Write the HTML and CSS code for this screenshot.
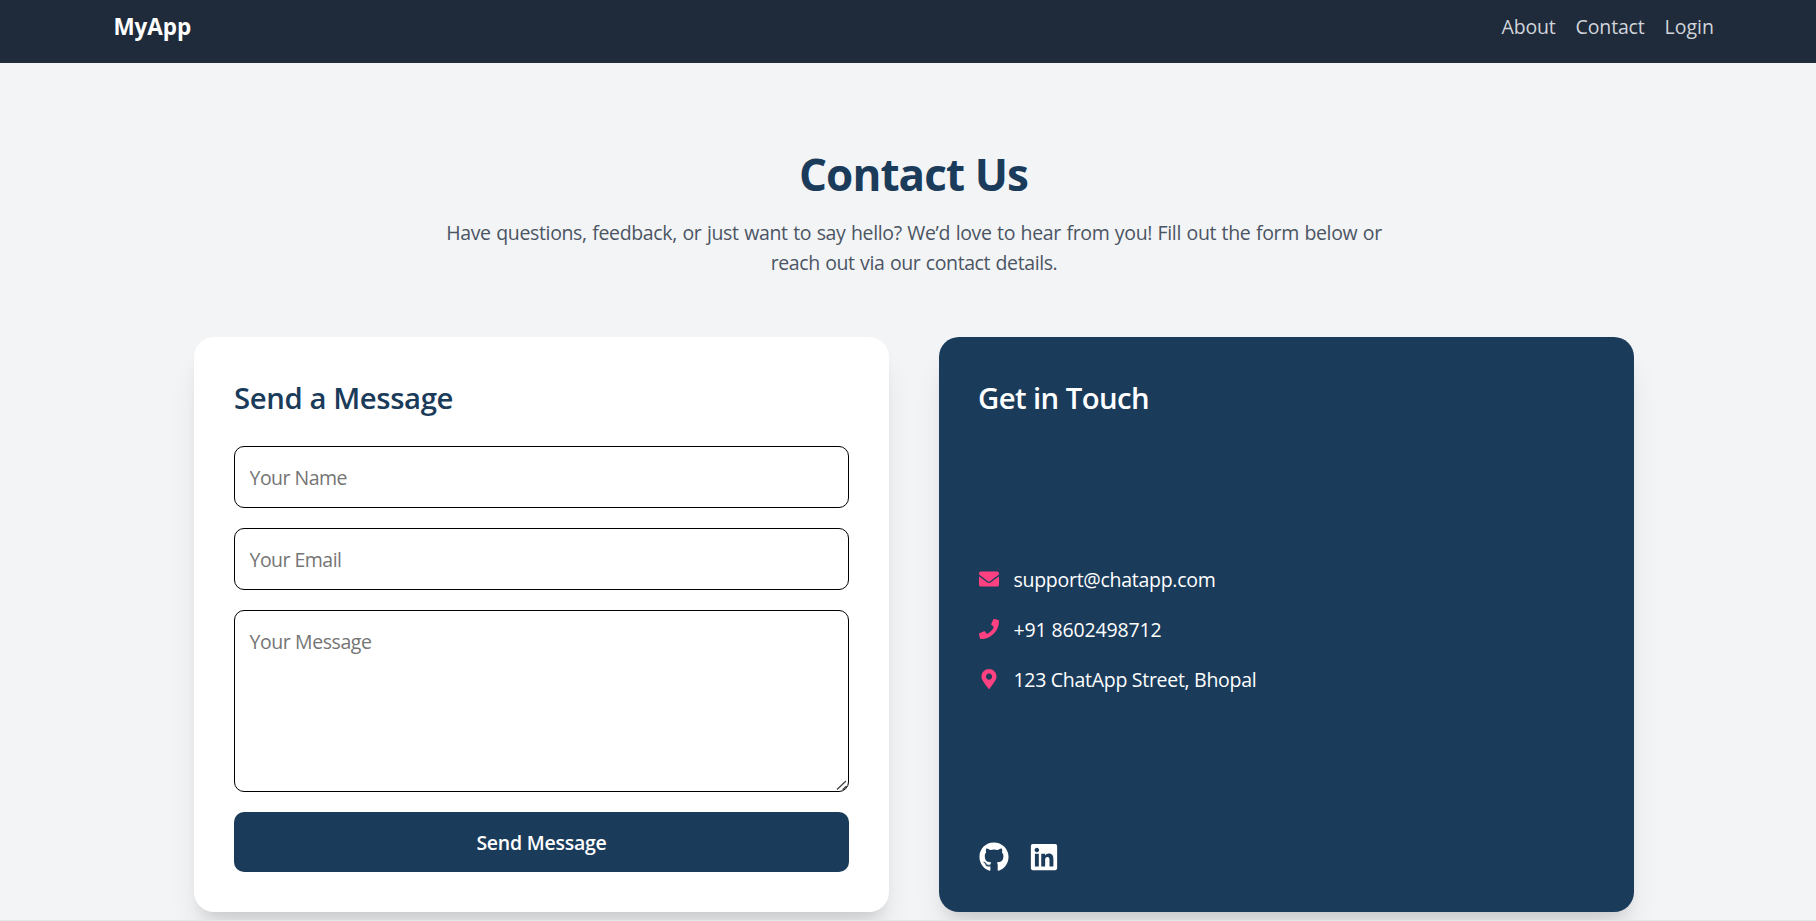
FILE: index.html
```html
<!DOCTYPE html>
<html lang="en">
<head>
<meta charset="utf-8">
<title>Contact Us - MyApp</title>
<link rel="stylesheet" href="styles.css">
</head>
<body>
<div class="page">
  <header class="nav">
    <div class="nav-inner">
      <a class="brand">MyApp</a>
      <nav class="links">
        <a>About</a>
        <a>Contact</a>
        <a class="login">Login</a>
      </nav>
    </div>
  </header>
  <main class="contact">
    <section class="hero">
      <h1>Contact Us</h1>
      <p>Have questions, feedback, or just want to say hello? We’d love to hear from you! Fill out the form below or<br><span class="tail">reach out via our contact details.</span></p>
    </section>
    <div class="cards">
      <section class="card form-card">
        <h2>Send a Message</h2>
        <form class="form">
          <input class="field" type="text" placeholder="Your Name">
          <input class="field" type="email" placeholder="Your Email">
          <div class="area-wrap">
            <textarea class="field area" placeholder="Your Message"></textarea>
            <svg class="grip" viewBox="0 0 12 12"><path d="M1 10.500L10 2M6.500 10.800L10.500 7"/></svg>
          </div>
          <button class="send" type="button">Send Message</button>
        </form>
      </section>
      <section class="card info-card">
        <h2>Get in Touch</h2>
        <ul class="details">
          <li>
            <svg class="icon" viewBox="0 0 512 512"><path d="M502.3 190.8c3.900-3.100 9.700-.2 9.700 4.700V400c0 26.500-21.500 48-48 48H48c-26.500 0-48-21.500-48-48V195.600c0-5 5.700-7.800 9.700-4.700 22.400 17.400 52.100 39.500 154.100 113.600 21.100 15.400 56.700 47.800 92.200 47.600 35.700.3 72-32.800 92.300-47.600 102-74.100 131.600-96.300 154-113.700zM256 320c23.200.4 56.600-29.200 73.400-41.400 132.700-96.300 142.800-104.700 173.400-128.700 5.800-4.500 9.200-11.500 9.200-18.900v-19c0-26.500-21.500-48-48-48H48c-26.500 0-48 21.500-48 48v19c0 7.400 3.400 14.300 9.200 18.900 30.600 23.900 40.700 32.400 173.400 128.700 16.800 12.200 50.200 41.800 73.400 41.400z"/></svg>
            <span class="mail">support@chatapp.com</span>
          </li>
          <li>
            <svg class="icon" viewBox="0 0 512 512"><path d="M493.400 24.600l-104-24c-11.300-2.600-22.900 3.300-27.500 13.900l-48 112c-4.200 9.800-1.400 21.300 6.900 28l60.600 49.600c-36 76.700-98.900 140.500-177.200 177.200l-49.600-60.600c-6.800-8.300-18.200-11.100-28-6.900l-112 48C3.900 366.500-2 378.100.6 389.400l24 104C27.100 504.200 36.700 512 48 512c256.100 0 464-207.500 464-464 0-11.200-7.700-20.900-18.600-23.400z"/></svg>
            <span class="phone">+91 8602498712</span>
          </li>
          <li>
            <svg class="icon" viewBox="0 0 384 512"><path d="M172.268 501.670C26.970 291.031 0 269.413 0 192 0 85.961 85.961 0 192 0s192 85.961 192 192c0 77.413-26.970 99.031-172.268 309.670-9.535 13.774-29.930 13.773-39.464 0zM192 272c44.183 0 80-35.817 80-80s-35.817-80-80-80-80 35.817-80 80 35.817 80 80 80z"/></svg>
            <span class="address">123 ChatApp Street, Bhopal</span>
          </li>
        </ul>
        <div class="social">
          <svg viewBox="0 0 496 512"><path d="M165.900 397.400c0 2-2.300 3.600-5.200 3.600-3.300.3-5.600-1.300-5.600-3.600 0-2 2.300-3.600 5.200-3.600 3-.3 5.600 1.300 5.600 3.600zm-31.100-4.500c-.7 2 1.300 4.300 4.300 4.900 2.600 1 5.600 0 6.200-2s-1.300-4.300-4.300-5.200c-2.600-.7-5.500.3-6.200 2.300zm44.200-1.700c-2.900.7-4.900 2.600-4.600 4.900.3 2 2.900 3.300 5.900 2.600 2.900-.7 4.900-2.600 4.600-4.600-.3-1.900-3-3.200-5.900-2.900zM244.800 8C106.100 8 0 113.300 0 252c0 110.900 69.800 205.800 169.500 239.200 12.800 2.300 17.300-5.600 17.300-12.100 0-6.200-.3-40.400-.3-61.400 0 0-70 15-84.700-29.800 0 0-11.400-29.100-27.800-36.600 0 0-22.900-15.700 1.600-15.400 0 0 24.900 2 38.600 25.800 21.900 38.600 58.600 27.500 72.900 20.900 2.300-16 8.800-27.100 16-33.700-55.900-6.200-112.300-14.300-112.300-110.500 0-27.500 7.600-41.300 23.600-58.900-2.600-6.500-11.100-33.300 2.600-67.900 20.900-6.500 69 27 69 27 20-5.600 41.500-8.500 62.800-8.500s42.800 2.900 62.800 8.500c0 0 48.100-33.600 69-27 13.700 34.700 5.200 61.400 2.600 67.900 16 17.700 25.800 31.500 25.800 58.900 0 96.500-58.900 104.200-114.800 110.500 9.200 7.900 17 22.900 17 46.400 0 33.700-.3 75.400-.3 83.600 0 6.500 4.600 14.400 17.300 12.100C428.200 457.800 496 362.900 496 252 496 113.300 383.500 8 244.800 8zM97.200 352.900c-1.300 1-1 3.300.7 5.200 1.600 1.600 3.900 2.300 5.200 1 1.300-1 1-3.300-.7-5.200-1.600-1.600-3.900-2.300-5.200-1zm-10.800-8.100c-.7 1.300.3 2.900 2.300 3.900 1.600 1 3.600.7 4.300-.7.7-1.300-.3-2.900-2.300-3.900-2-.6-3.600-.3-4.300.7zm32.400 35.600c-1.600 1.300-1 4.300 1.300 6.200 2.300 2.300 5.200 2.600 6.500 1 1.300-1.300.7-4.300-1.300-6.200-2.200-2.300-5.200-2.600-6.500-1zm-11.400-14.700c-1.600 1-1.600 3.600 0 5.900 1.600 2.300 4.300 3.300 5.600 2.300 1.600-1.300 1.600-3.900 0-6.200-1.400-2.300-4-3.300-5.600-2z"/></svg>
          <svg viewBox="0 0 448 512"><path d="M416 32H31.900C14.300 32 0 46.500 0 64.300v383.400C0 465.500 14.300 480 31.900 480H416c17.600 0 32-14.500 32-32.300V64.300c0-17.800-14.400-32.300-32-32.300zM135.400 416H69V202.200h66.500V416zm-33.200-243c-21.300 0-38.500-17.300-38.500-38.500S80.900 96 102.200 96c21.200 0 38.500 17.300 38.500 38.500 0 21.300-17.200 38.500-38.500 38.500zm282.100 243h-66.400V312c0-24.800-.5-56.700-34.500-56.700-34.600 0-39.900 27-39.900 54.900V416h-66.400V202.200h63.700v29.200h.9c8.900-16.800 30.600-34.500 62.900-34.500 67.200 0 79.700 44.300 79.700 101.900V416z"/></svg>
        </div>
      </section>
    </div>
  </main>
  <div class="next-section"></div>
</div>
</body>
</html>
```
FILE: styles.css
```css
* { box-sizing: border-box; margin: 0; }
html, body { height: 921px; overflow: hidden; }
body {
  background: #f3f4f6;
  font: 19.5px/30px "Open Sans", "Noto Sans", sans-serif;
}
.page { width: 1828px; height: 921px; overflow: hidden; display: flex; flex-direction: column; }

.nav { height: 63px; flex: none; background: #1f2a3a; }
.nav-inner { width: 1600px; margin: 0 auto; display: flex; justify-content: space-between; align-items: flex-start; }
.brand { margin: 9px 0 0 -0.5px; font-size: 22.5px; line-height: 35px; font-weight: 700; letter-spacing: -0.1px; color: #fff; }
.links { display: flex; gap: 20px; padding-top: 12px; color: #d1d5db; letter-spacing: -0.15px; }
.login { letter-spacing: 0; }

.contact { height: 857px; flex: none; overflow: hidden; padding-top: 86px; }
.hero { text-align: center; color: #4b5563; letter-spacing: -0.35px; word-spacing: 0.8px; }
.hero h1 { margin: 0 1px 19px 0; font-size: 44px; line-height: 50px; font-weight: 700; letter-spacing: -0.9px; word-spacing: 0; color: #1b3b5a; }
.tail { letter-spacing: -0.4px; }

.cards { width: 1440px; margin: 59px auto 0; display: grid; grid-template-columns: 1fr 1fr; gap: 50px; }
.card {
  height: 575px;
  padding: 40px;
  border-radius: 20px;
  box-shadow: 0 25px 31px -6px rgba(0, 0, 0, 0.1), 0 10px 12.5px -7.5px rgba(0, 0, 0, 0.1);
}
.card h2 { padding-top: 1px; font-size: 29.3px; line-height: 41px; font-weight: 600; }
.form-card { background: #fff; }
.form-card h2 { margin-bottom: 27px; color: #1b3b5a; letter-spacing: -0.4px; }
.form { display: flex; flex-direction: column; gap: 20px; }
.field {
  width: 100%;
  height: 62px;
  padding: 15px 15px 15px 14.500px;
  border: 1px solid #000;
  border-radius: 10px;
  background: #fff;
  font: inherit;
  letter-spacing: -0.52px;
}
.field::placeholder { color: #757575; }
.area-wrap { position: relative; }
.area { height: 182px; padding-top: 16px; display: block; resize: none; letter-spacing: -0.42px; }
.grip { position: absolute; right: 1px; bottom: 1px; width: 12px; height: 12px; fill: none; stroke: #444; stroke-width: 1.3; }
.send {
  height: 60px;
  padding-top: 2px;
  border: 0;
  border-radius: 10px;
  background: #1b3b5a;
  color: #fff;
  font: inherit;
  font-weight: 600;
  letter-spacing: -0.24px;
}

.info-card { display: flex; flex-direction: column; justify-content: space-between; background: #1b3b5a; color: #fff; }
.info-card h2 { margin-left: -1px; letter-spacing: -0.58px; }
.details { list-style: none; padding: 0 0 2px; display: grid; gap: 20px; }
.details li { display: flex; align-items: center; gap: 14.5px; }
.icon { width: 20px; height: 20px; margin-bottom: 2px; fill: #ff4081; }
.mail { letter-spacing: -0.28px; }
.phone { letter-spacing: -0.14px; }
.address { letter-spacing: -0.29px; }
.social { display: flex; gap: 20px; }
.social svg { width: 30px; height: 30px; fill: #fff; }
.next-section { height: 1px; flex: none; background: #e5e7eb; }
```
